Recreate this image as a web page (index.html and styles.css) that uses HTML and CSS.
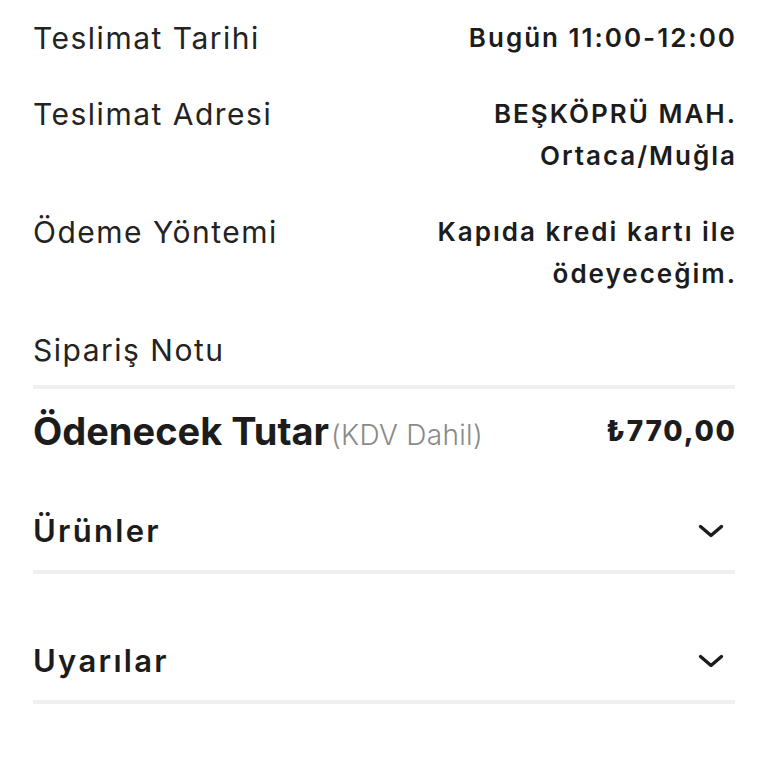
FILE: index.html
```html
<!DOCTYPE html>
<html lang="tr">
  <head>
    <meta charset="UTF-8" />
    <meta name="viewport" content="width=device-width, initial-scale=1.0" />
    <title>Sipariş Özeti</title>
    <link rel="stylesheet" href="styles.css">
  </head>
  <body>
    <div class="summary">
      <div class="info">
        <div class="row">
          <span class="label">Teslimat Tarihi</span>
          <span class="value">Bugün 11:00-12:00</span>
        </div>
        <div class="row">
          <span class="label">Teslimat Adresi</span>
          <span class="value">BEŞKÖPRÜ MAH.<br />Ortaca/Muğla</span>
        </div>
        <div class="row">
          <span class="label">Ödeme Yöntemi</span>
          <span class="value">Kapıda kredi kartı ile<br />ödeyeceğim.</span>
        </div>
        <div class="row">
          <span class="label">Sipariş Notu</span>
          <span class="value"></span>
        </div>
      </div>

      <div class="total">
        <span class="total-label">Ödenecek Tutar<small>(KDV Dahil)</small></span>
        <span class="total-price">₺770,00</span>
      </div>

      <div class="accordion">
        <div class="acc-item">
          <span class="acc-title">Ürünler</span>
          <svg class="chevron" width="26" height="14" viewBox="0 0 26 14">
            <path d="M2.5 2.5 L13 11.5 L23.5 2.5" />
          </svg>
        </div>
        <div class="acc-item">
          <span class="acc-title">Uyarılar</span>
          <svg class="chevron" width="26" height="14" viewBox="0 0 26 14">
            <path d="M2.5 2.5 L13 11.5 L23.5 2.5" />
          </svg>
        </div>
      </div>
    </div>
  </body>
</html>
```

FILE: styles.css
```css
body {
  margin: 0;
  background: #ffffff;
  font-family: Inter, "Noto Sans", sans-serif;
  color: #1c1c1c;
}

.summary {
  padding: 17px 33px 0 33px;
}

.row {
  display: flex;
  justify-content: space-between;
  align-items: flex-start;
  line-height: 42px;
  margin-bottom: 34px;
}

.row:last-child {
  margin-bottom: 0;
}

.label {
  font-size: 30px;
  font-weight: 400;
  letter-spacing: 1.5px;
  color: #232323;
}

.value {
  font-size: 26px;
  font-weight: 600;
  letter-spacing: 2px;
  text-align: right;
  margin-right: -2px;
}

.info {
  padding-bottom: 14px;
  border-bottom: 4px solid #efefef;
}

.total {
  display: flex;
  justify-content: space-between;
  align-items: baseline;
  height: 46px;
  line-height: 46px;
  margin-top: 19px;
}

.total-label {
  font-size: 38px;
  font-weight: 700;
}

.total-label small {
  font-size: 28px;
  font-weight: 300;
  letter-spacing: 0.3px;
  color: #8a8a8a;
  margin-left: 2px;
}

.total-price {
  font-size: 28px;
  font-weight: 800;
  letter-spacing: 1.8px;
  margin-right: -1.8px;
  position: relative;
  top: -4px;
}

.accordion {
  display: flex;
  flex-direction: column;
  gap: 29px;
  margin-top: 19px;
}

.acc-item {
  display: flex;
  justify-content: space-between;
  align-items: center;
  height: 36px;
  padding: 40px 0 21px 0;
  line-height: 36px;
  border-bottom: 4px solid #efefef;
}

.acc-title {
  font-size: 31px;
  font-weight: 600;
  letter-spacing: 2.3px;
}

.chevron {
  margin-right: 11px;
  fill: none;
  stroke: #1c1c1c;
  stroke-width: 3.4;
  stroke-linecap: round;
  stroke-linejoin: round;
}
```
